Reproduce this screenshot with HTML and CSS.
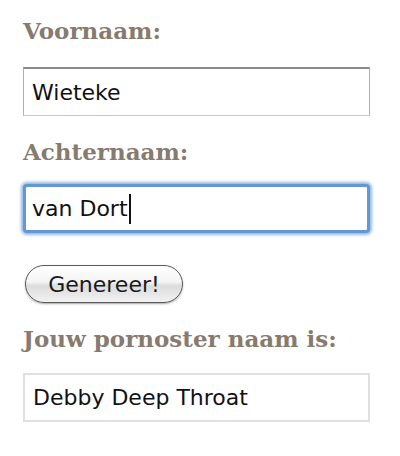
FILE: index.html
```html
<!DOCTYPE html>
<html lang="nl">
<head>
<meta charset="utf-8">
<title>Pornoster naam</title>
<link rel="stylesheet" href="styles.css">
</head>
<body>
<form class="form">
  <label class="label label-first">Voornaam:</label>
  <div class="field">Wieteke</div>
  <label class="label label-second">Achternaam:</label>
  <div class="field field-focus">van Dort<span class="caret"></span></div>
  <div class="button-row"><span class="button">Genereer!</span></div>
  <label class="label label-third">Jouw pornoster naam is:</label>
  <div class="field field-result">Debby Deep Throat</div>
</form>
</body>
</html>
```
FILE: styles.css
```css
html, body {
  margin: 0;
  padding: 0;
  background: #ffffff;
}
.form {
  display: flex;
  flex-direction: column;
  align-items: flex-start;
  padding: 18px 0 0 23px;
}
.label {
  display: block;
  font-family: "DejaVu Serif", Georgia, serif;
  font-weight: bold;
  font-size: 23px;
  line-height: 26px;
  color: #877b6f;
}
.label-second { margin-top: 23px; }
.label-third { margin-top: 23px; }
.field {
  box-sizing: border-box;
  width: 347px;
  height: 49px;
  margin-top: 23px;
  display: flex;
  align-items: center;
  padding-left: 8px;
  font-family: "DejaVu Sans", "Lucida Grande", sans-serif;
  font-size: 22px;
  color: #111;
  background: #fff;
  border: 1px solid #c8c8c8;
  border-top: 2px solid #8a8a8a;
  border-left-color: #b0b0b0;
  border-right-color: #b0b0b0;
}
.field-focus {
  margin-top: 19px;
  border: 3px solid #6597d4;
  border-radius: 4px;
  box-shadow: 0 0 3px 2px rgba(110, 160, 220, 0.75);
  padding-left: 6px;
}
.caret {
  display: inline-block;
  width: 2px;
  height: 30px;
  background: #111;
  margin-left: 1px;
}
.field-result {
  margin-top: 21px;
  border: 2px solid #e0e0e0;
  padding-left: 8px;
}
.button-row {
  margin-top: 32px;
}
.button {
  box-sizing: border-box;
  display: flex;
  align-items: center;
  justify-content: center;
  width: 158px;
  height: 38px;
  margin-left: 2px;
  border: 1px solid #5a5a5a;
  border-radius: 19px;
  background: linear-gradient(#ffffff 0%, #f4f4f4 45%, #dcdcdc 55%, #f2f2f2 100%);
  box-shadow: 0 1px 2px rgba(0,0,0,0.35);
  font-family: "DejaVu Sans", "Lucida Grande", sans-serif;
  font-size: 22px;
  color: #1a1a1a;
}
```
